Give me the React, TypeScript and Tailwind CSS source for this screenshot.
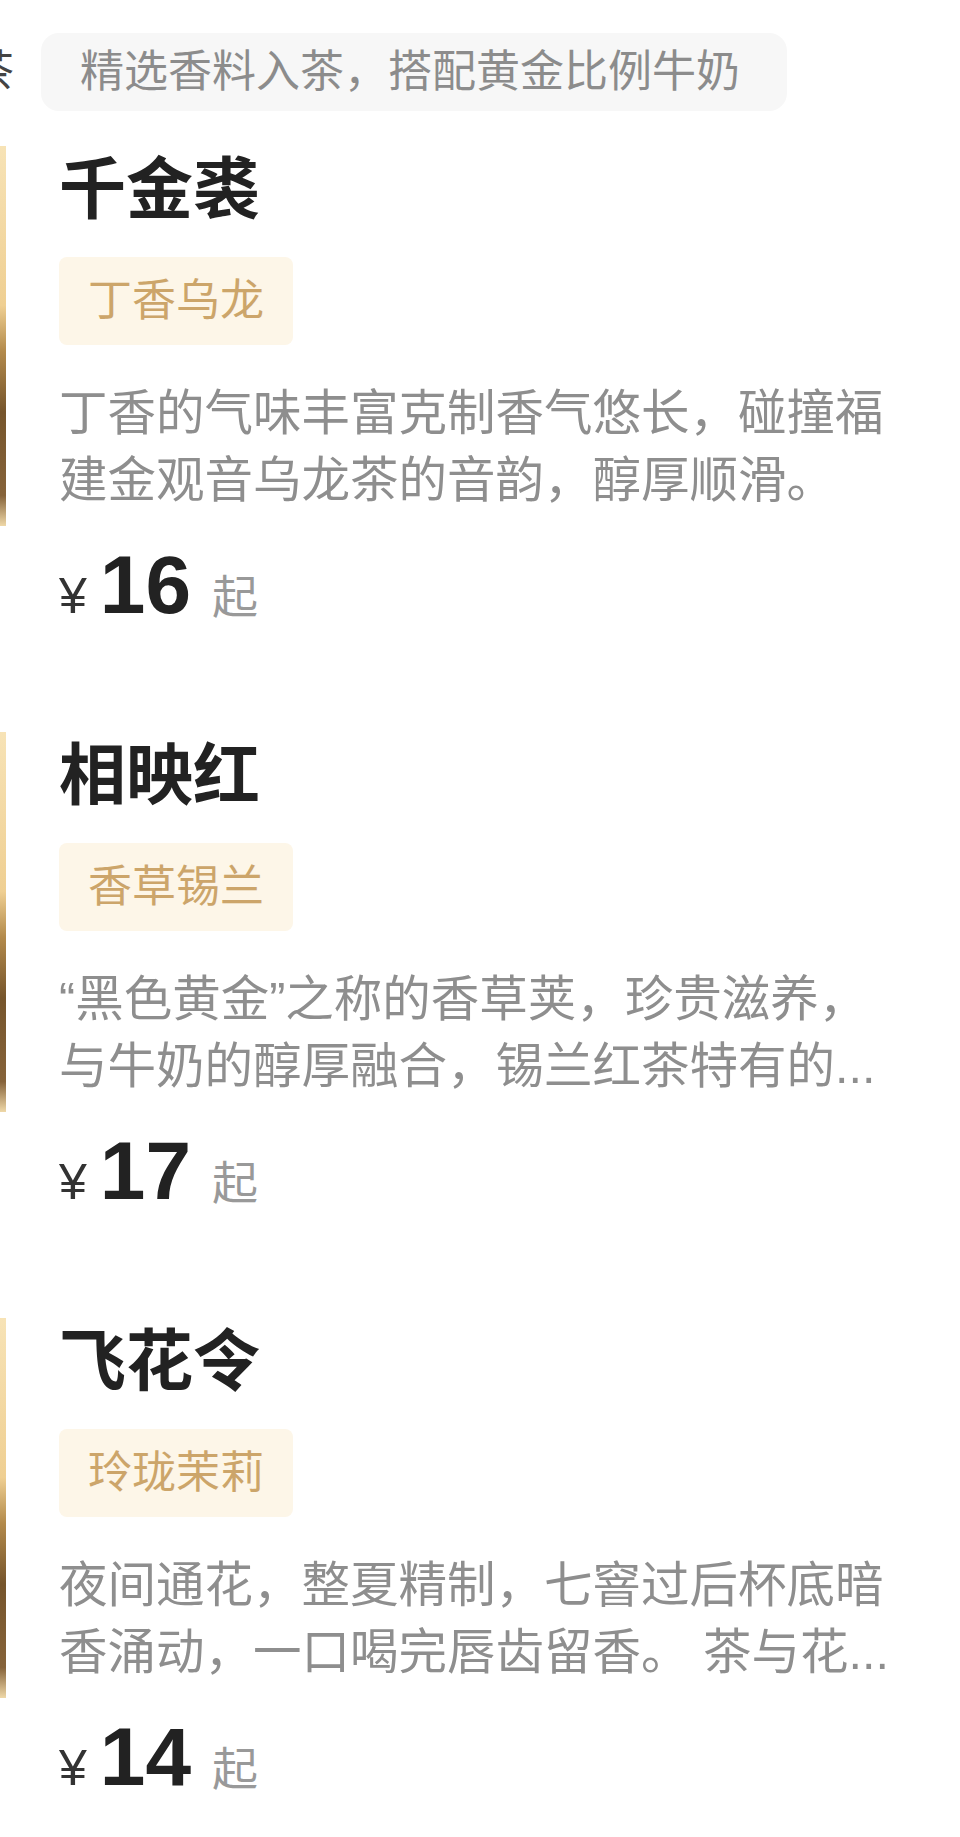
import React from 'react';

type Tea = {
  name: string;
  tag: string;
  lines: string[];
  price: number;
};

const teas: Tea[] = [
  {
    name: '千金裘',
    tag: '丁香乌龙',
    lines: ['丁香的气味丰富克制香气悠长，碰撞福', '建金观音乌龙茶的音韵，醇厚顺滑。'],
    price: 16,
  },
  {
    name: '相映红',
    tag: '香草锡兰',
    lines: ['“黑色黄金”之称的香草荚，珍贵滋养，', '与牛奶的醇厚融合，锡兰红茶特有的...'],
    price: 17,
  },
  {
    name: '飞花令',
    tag: '玲珑茉莉',
    lines: ['夜间通花，整夏精制，七窨过后杯底暗', '香涌动，一口喝完唇齿留香。 茶与花...'],
    price: 14,
  },
];

function TeaCard({ tea }: { tea: Tea }) {
  return (
    <div className="flex">
      {/* edge of the product photo, mostly off screen */}
      <div className="w-[6px] h-[380px] -mt-[4px] shrink-0 bg-[linear-gradient(to_bottom,#f7e3b6_0%,#efcf92_42%,#b38a4b_54%,#76552c_70%,#86633a_92%,#efd8a8_100%)]" />
      <div className="ml-[53px] flex flex-col items-start">
        <h2 className="text-[67px] leading-[80px] font-bold text-[#222]">{tea.name}</h2>
        <div className="mt-[27px] h-[88px] px-[29px] flex items-center rounded-[8px] bg-[#fdf6e8] text-[44px] text-[#cca56a]">
          {tea.tag}
        </div>
        <div className="mt-[35px] text-[48.5px] leading-[67px] text-[#8e8e8e]">
          {tea.lines.map((line) => (
            <div key={line} className="whitespace-nowrap">
              {line}
            </div>
          ))}
        </div>
        <div className="mt-[30px] flex items-baseline leading-none">
          <span className="text-[50px] text-[#333]">¥</span>
          <span className="ml-[13px] text-[82px] font-bold text-[#222]">{tea.price}</span>
          <span className="ml-[21px] text-[46px] text-[#999]">起</span>
        </div>
      </div>
    </div>
  );
}

export default function App() {
  return (
    <div className="w-[960px] min-h-[1837px] bg-white overflow-hidden font-['Liberation_Sans','Noto_Sans_CJK_SC',sans-serif]">
      <div className="flex items-center pt-[33px]">
        <span className="-ml-[30px] text-[44px] leading-[78px] text-[#444]">茶</span>
        <div className="ml-[27px] h-[78px] pl-[39px] pr-[47px] flex items-center rounded-[18px] bg-[#f7f7f7] text-[44px] text-[#8c8c8c]">
          精选香料入茶，搭配黄金比例牛奶
        </div>
      </div>

      <div className="mt-[39px] flex flex-col gap-[110px]">
        {teas.map((tea) => (
          <TeaCard key={tea.name} tea={tea} />
        ))}
      </div>
    </div>
  );
}
